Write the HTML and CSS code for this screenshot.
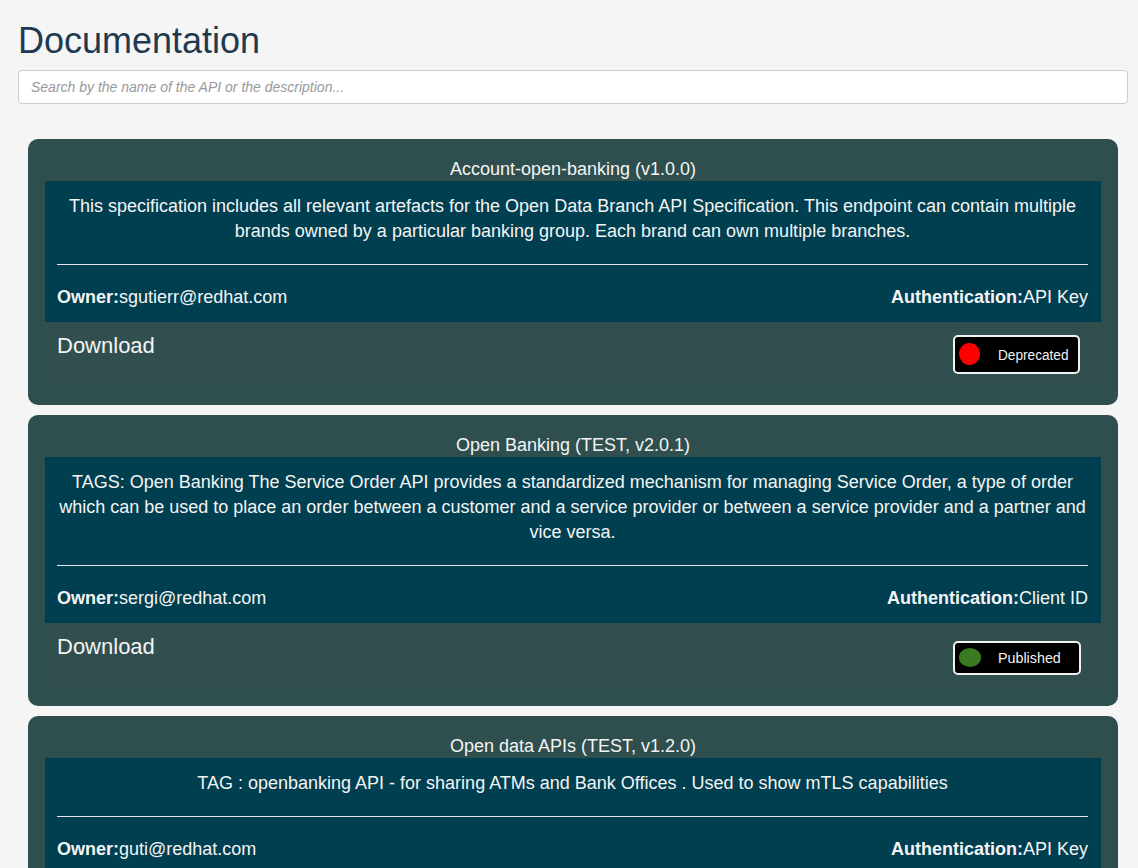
FILE: index.html
```html
<!DOCTYPE html>
<html lang="en">
<head>
<meta charset="utf-8">
<title>Documentation</title>
<link rel="stylesheet" href="styles.css">
</head>
<body>
<div class="page">
  <h1 class="page-title">Documentation</h1>
  <input class="search" type="text" placeholder="Search by the name of the API or the description...">
  <div class="cards">
    <div class="card">
      <div class="card-title">Account-open-banking (v1.0.0)</div>
      <div class="card-body">
        <p class="desc">This specification includes all relevant artefacts for the Open Data Branch API Specification. This endpoint can contain multiple brands owned by a particular banking group. Each brand can own multiple branches.</p>
        <hr class="sep">
        <div class="meta">
          <span><b>Owner:</b>sgutierr@redhat.com</span>
          <span><b>Authentication:</b>API Key</span>
        </div>
      </div>
      <div class="card-footer">
        <span class="download">Download</span>
        <div class="badge badge-dep">
          <span class="dot dot-red"></span>
          <span class="badge-text text-dep">Deprecated</span>
        </div>
      </div>
    </div>

    <div class="card">
      <div class="card-title">Open Banking (TEST, v2.0.1)</div>
      <div class="card-body">
        <p class="desc">TAGS: Open Banking The Service Order API provides a standardized mechanism for managing Service Order, a type of order which can be used to place an order between a customer and a service provider or between a service provider and a partner and vice versa.</p>
        <hr class="sep">
        <div class="meta">
          <span><b>Owner:</b>sergi@redhat.com</span>
          <span><b>Authentication:</b>Client ID</span>
        </div>
      </div>
      <div class="card-footer">
        <span class="download">Download</span>
        <div class="badge badge-pub">
          <span class="dot dot-green"></span>
          <span class="badge-text text-pub">Published</span>
        </div>
      </div>
    </div>

    <div class="card">
      <div class="card-title">Open data APIs (TEST, v1.2.0)</div>
      <div class="card-body">
        <p class="desc">TAG : openbanking API - for sharing ATMs and Bank Offices . Used to show mTLS capabilities</p>
        <hr class="sep">
        <div class="meta">
          <span><b>Owner:</b>guti@redhat.com</span>
          <span><b>Authentication:</b>API Key</span>
        </div>
      </div>
      <div class="card-footer">
        <span class="download">Download</span>
        <div class="badge badge-pub">
          <span class="dot dot-green"></span>
          <span class="badge-text text-pub">Published</span>
        </div>
      </div>
    </div>
  </div>
</div>
</body>
</html>
```

FILE: styles.css
```css
html, body {
  margin: 0;
  padding: 0;
  background: #f5f5f5;
}

body {
  font-family: "Liberation Sans", Arial, sans-serif;
  color: #333;
}

.page {
  padding: 0 10px 0 18px;
}

.page-title {
  margin: 21px 0 9px;
  font-size: 36px;
  line-height: 40px;
  font-weight: 400;
  color: #1f3a50;
}

.search {
  display: block;
  box-sizing: border-box;
  width: 100%;
  height: 34px;
  margin: 0;
  padding: 6px 12px;
  border: 1px solid #cccccc;
  border-radius: 4px;
  background: #fff;
  font-family: "Liberation Sans", Arial, sans-serif;
  font-size: 14px;
  color: #555;
}

.search::placeholder {
  color: #999;
  font-style: italic;
}

.cards {
  margin: 35px 10px 0 10px;
}

.card {
  background: #2f4f4f;
  border-radius: 10px;
  padding: 18px 17px 18px;
  margin-bottom: 10px;
}

.card-title {
  text-align: center;
  font-size: 18px;
  line-height: 24px;
  color: #f4f4f4;
}

.card-body {
  background: #003f50;
  padding: 13px 13px 12px 12px;
  color: #f4f4f4;
}

.desc {
  margin: 0;
  text-align: center;
  font-size: 18px;
  line-height: 25px;
}

.sep {
  margin: 20px 0 0;
  border: 0;
  border-top: 1px solid #e8e8e8;
  height: 0;
}

.meta {
  margin-top: 20px;
  display: flex;
  justify-content: space-between;
  font-size: 18px;
  line-height: 25px;
}

.meta b {
  font-weight: 700;
}

.card-footer {
  box-sizing: border-box;
  height: 65px;
  background: #324f4f;
  padding: 9px 21px 13px 12px;
  display: flex;
  justify-content: space-between;
  align-items: flex-end;
}

.download {
  align-self: flex-start;
  font-size: 22px;
  line-height: 30px;
  color: #f4f4f4;
}

.badge {
  box-sizing: border-box;
  display: flex;
  align-items: center;
  background: #000;
  border: 2px solid #f0f0f0;
  border-radius: 5px;
  color: #f2f2f2;
}

.badge-dep {
  width: 127px;
  height: 39px;
  padding-left: 4px;
}

.badge-pub {
  width: 128px;
  height: 34px;
  padding-left: 4px;
  margin-right: -1px;
}

.dot {
  display: block;
  border-radius: 50%;
  flex: none;
}

.dot-red {
  width: 21px;
  height: 22px;
  background: #ff0000;
  margin-top: -2px;
}

.dot-green {
  width: 22px;
  height: 19px;
  background: #3a7a20;
  margin-top: -1px;
}

.badge-text {
  display: inline-block;
  white-space: nowrap;
}

.text-dep {
  font-size: 15.5px;
  margin-left: 18px;
  transform: scaleX(0.88);
  transform-origin: left center;
}

.text-pub {
  font-size: 14.3px;
  margin-left: 17px;
}
```
